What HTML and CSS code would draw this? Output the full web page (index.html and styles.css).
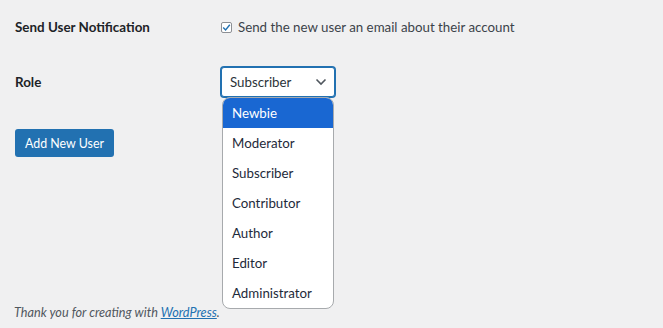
FILE: index.html
```html
<!DOCTYPE html>
<html lang="en">
<head>
    <meta charset="UTF-8">
    <meta name="viewport" content="width=device-width, initial-scale=1.0">
    <title>Add New User</title>
    <link rel="stylesheet" href="styles.css">
</head>
<body>
    <main class="wrap">
        <div class="form-row row-notify">
            <div class="row-label">Send User Notification</div>
            <label class="check">
                <span class="check-box">
                    <svg width="9" height="9" viewBox="0 0 9 9"><path d="M1.2 4.6 L3.6 7 L7.8 1.8" fill="none" stroke="#2271b1" stroke-width="1.4"/></svg>
                </span>
                Send the new user an email about their account
            </label>
        </div>

        <div class="form-row row-role">
            <div class="row-label">Role</div>
            <div class="select">
                <span>Subscriber</span>
                <svg class="chevron" width="12" height="8" viewBox="0 0 12 8"><path d="M1.5 1.5 L6 6 L10.5 1.5" fill="none" stroke="#50575e" stroke-width="1.6"/></svg>
                <ul class="options">
                    <li class="active">Newbie</li>
                    <li>Moderator</li>
                    <li>Subscriber</li>
                    <li>Contributor</li>
                    <li>Author</li>
                    <li>Editor</li>
                    <li>Administrator</li>
                </ul>
            </div>
        </div>

        <button class="button">Add New User</button>
    </main>

    <footer class="footer">
        Thank you for creating with <a href="#">WordPress</a>.
    </footer>
</body>
</html>
```

FILE: styles.css
```css
html{
    box-sizing: border-box;
    font-family: 'Lato', 'Noto Sans', sans-serif;
    font-size: 13.3px;
}

*,
*:after,
*:before{
    box-sizing: inherit;
}

body{
    margin: 0;
    background-color: #f0f0f1;
    color: #3c434a;
    height: 328px;
    display: flex;
    flex-direction: column;
    justify-content: space-between;
    overflow: hidden;
}

.wrap{
    padding: 17px 0 0 15px;
}

.form-row{
    display: flex;
    align-items: center;
}

.row-label{
    width: 206px;
    font-weight: 700;
    font-size: 13.4px;
    color: #1d2327;
    line-height: 20px;
}

.row-notify{
    height: 20px;
}

.row-role{
    margin-top: 30px;
}

.check{
    display: flex;
    align-items: center;
    gap: 6px;
    line-height: 20px;
    color: #3c434a;
}

.check-box{
    width: 11px;
    height: 11px;
    border: 1px solid #8c8f94;
    border-radius: 2px;
    background: #fff;
    display: flex;
    align-items: center;
    justify-content: center;
}

.select{
    position: relative;
    width: 114px;
    height: 30px;
    border: 1px solid #2271b1;
    box-shadow: 0 0 0 1px #2271b1;
    border-radius: 3px;
    background: #fff;
    display: flex;
    align-items: center;
    justify-content: space-between;
    padding: 0 7px 0 8px;
    color: #2c3338;
}

.options{
    position: absolute;
    top: 29px;
    left: 0;
    width: 112px;
    margin: 0;
    padding: 0;
    list-style: none;
    background: #fff;
    border: 1px solid #a7aaad;
    border-radius: 8px;
    overflow: hidden;
    z-index: 2;
}

.options li{
    height: 30px;
    line-height: 30px;
    padding-left: 9px;
    color: #1e2a3a;
}

.options li.active{
    background: #1967d2;
    color: #fff;
}

.button{
    margin-top: 32px;
    height: 28px;
    padding: 0 10px;
    border: 0;
    border-radius: 3px;
    background: #2271b1;
    color: #fff;
    font-family: inherit;
    font-size: 12.4px;
}

.footer{
    padding: 0 0 6px 14px;
    font-size: 12.7px;
    font-style: italic;
    color: #50575e;
    line-height: 20px;
}

.footer a{
    color: #2271b1;
}
```
